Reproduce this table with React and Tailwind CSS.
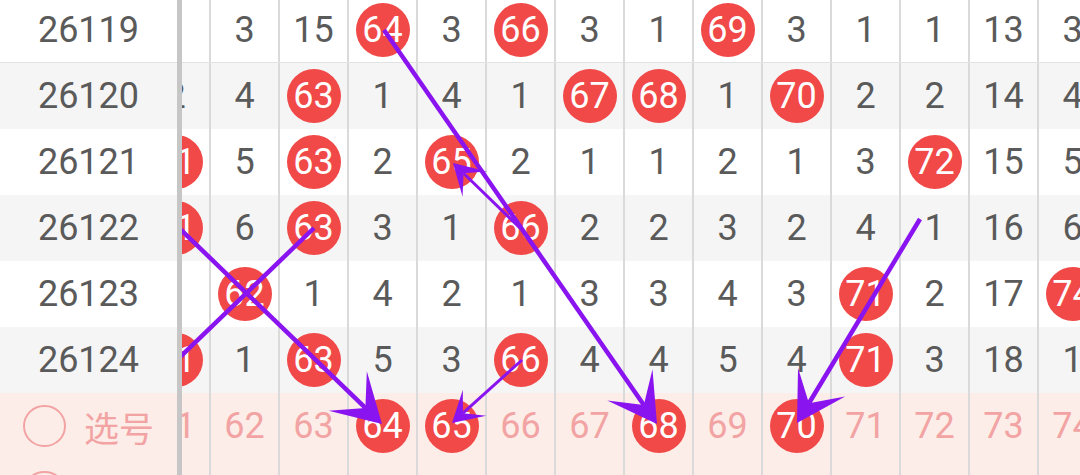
const COLS = [61, 62, 63, 64, 65, 66, 67, 68, 69, 70, 71, 72, 73, 74]

// 0 = drawn number (red ball)
const ROWS = [
  { period: '26119', bg: 'bg-white', first: true, v: [1, 3, 15, 0, 3, 0, 3, 1, 0, 3, 1, 1, 13, 3] },
  { period: '26120', bg: 'bg-[#f5f5f5]', v: [2, 4, 0, 1, 4, 1, 0, 0, 1, 0, 2, 2, 14, 4] },
  { period: '26121', bg: 'bg-white', v: [0, 5, 0, 2, 0, 2, 1, 1, 2, 1, 3, 0, 15, 5] },
  { period: '26122', bg: 'bg-[#f5f5f5]', v: [0, 6, 0, 3, 1, 0, 2, 2, 3, 2, 4, 1, 16, 6] },
  { period: '26123', bg: 'bg-white', v: [1, 0, 1, 4, 2, 1, 3, 3, 4, 3, 0, 2, 17, 0] },
  { period: '26124', bg: 'bg-[#f5f5f5]', v: [0, 1, 0, 5, 3, 0, 4, 4, 5, 4, 0, 3, 18, 1] },
]

const PICKED = [64, 65, 68, 70]

const LINES = [
  { x1: 384, y1: 30, x2: 657, y2: 424, w: 4.5, head: 55 },
  { x1: 176, y1: 225, x2: 382, y2: 424, w: 4.5, head: 55 },
  { x1: 314, y1: 228, x2: 176, y2: 361, w: 4.5, head: 0 },
  { x1: 521, y1: 229, x2: 453, y2: 163, w: 3, head: 35 },
  { x1: 522, y1: 360, x2: 452, y2: 423, w: 3, head: 35 },
  { x1: 920, y1: 219, x2: 797, y2: 423, w: 4.5, head: 55 },
]

function Ball({ n }) {
  return (
    <div className="w-[54px] h-[54px] rounded-full bg-[#f14848] text-white flex items-center justify-center leading-none">
      {n}
    </div>
  )
}

function Arrow({ x1, y1, x2, y2, w, head }) {
  const len = Math.hypot(x2 - x1, y2 - y1)
  const ux = (x2 - x1) / len
  const uy = (y2 - y1) / len
  if (!head) {
    return <line x1={x1} y1={y1} x2={x2} y2={y2} stroke="#8a14f0" strokeWidth={w} />
  }
  const back = Math.atan2(-uy, -ux)
  const a = Math.PI / 6
  const p1 = [x2 + head * Math.cos(back + a), y2 + head * Math.sin(back + a)]
  const p2 = [x2 + head * Math.cos(back - a), y2 + head * Math.sin(back - a)]
  const nx = x2 - ux * head * 0.42
  const ny = y2 - uy * head * 0.42
  const pts = [[x2, y2], p1, [nx, ny], p2].map((p) => p.join(',')).join(' ')
  return (
    <g>
      <line x1={x1} y1={y1} x2={nx} y2={ny} stroke="#8a14f0" strokeWidth={w} />
      <polygon points={pts} fill="#8a14f0" />
    </g>
  )
}

function PickLabel({ label }) {
  return (
    <div className="flex items-center gap-[18px] pl-[23px] text-[#f2a3a3]">
      <div className="w-[43px] h-[42px] rounded-full border-2 border-[#f2a3a3]" />
      <span className="text-[35px] leading-none font-['Noto_Sans_CJK_SC',sans-serif]">{label}</span>
    </div>
  )
}

export default function App() {
  return (
    <div className="w-[1080px] h-[475px] overflow-hidden bg-white font-['Roboto',sans-serif] text-[36px] text-[#5a5a5a]">
      <div className="-mt-[3px] flex">
        <div className="w-[182px] shrink-0 border-r-[5px] border-[#c6c6c6]">
          {ROWS.map((r) => (
            <div
              key={r.period}
              className={`h-[66px] flex items-center justify-center leading-none ${r.bg} ${r.first ? 'border-b border-[#e2e2e2]' : ''}`}
            >
              {r.period}
            </div>
          ))}
          <div className="h-[66px] flex items-center bg-[#fdede8]">
            <PickLabel label="选号" />
          </div>
          <div className="h-[66px] flex items-center bg-[#fdede8]">
            <PickLabel label="胆码" />
          </div>
        </div>

        <div className="relative flex-1 overflow-hidden">
          <div className="-ml-[40px] w-max">
            {ROWS.map((r) => (
              <div key={r.period} className={`h-[66px] flex ${r.bg} ${r.first ? 'border-b border-[#e2e2e2]' : ''}`}>
                {r.v.map((x, i) => (
                  <div
                    key={i}
                    className="w-[69px] shrink-0 border-r-2 border-[#dadada] flex items-center justify-center leading-none"
                  >
                    {x === 0 ? <Ball n={COLS[i]} /> : x}
                  </div>
                ))}
              </div>
            ))}
            <div className="h-[66px] flex bg-[#fdede8]">
              {COLS.map((c) => (
                <div
                  key={c}
                  className="w-[69px] shrink-0 border-r-2 border-[#dadada] flex items-center justify-center leading-none text-[#f2a3a3]"
                >
                  {PICKED.includes(c) ? <Ball n={c} /> : c}
                </div>
              ))}
            </div>
            <div className="h-[66px] flex bg-[#fdede8]">
              {COLS.map((c) => (
                <div key={c} className="w-[69px] shrink-0 border-r-2 border-[#dadada]" />
              ))}
            </div>
          </div>

          <svg className="absolute left-0 top-0" width="898" height="528" viewBox="182 -3 898 528">
            {LINES.map((l, i) => (
              <Arrow key={i} {...l} />
            ))}
          </svg>
        </div>
      </div>
    </div>
  )
}
